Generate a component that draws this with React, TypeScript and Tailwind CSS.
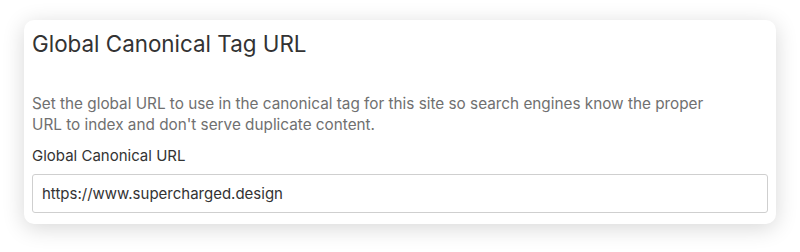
export default function App() {
  return (
    <div className="h-[252px] w-[800px] bg-white px-6 pt-5 font-['Inter',sans-serif]">
      <div className="flex h-[204px] flex-col rounded-[10px] bg-white px-2 pt-[10px] shadow-[0_4px_22px_rgba(0,0,0,0.16)]">
        <h2 className="text-[22.4px] leading-[28px] text-[#333]">Global Canonical Tag URL</h2>
        <p className="mt-[35px] max-w-[690px] text-[15.3px] leading-[21px] text-[#707070]">
          Set the global URL to use in the canonical tag for this site so search engines know the proper URL to index and don't serve duplicate content.
        </p>
        <label className="mt-[11px] text-[15px] leading-[20px] text-[#333]">Global Canonical URL</label>
        <input
          readOnly
          value="https://www.supercharged.design"
          className="mt-2 h-[39px] w-full rounded-[3px] border border-[#cfcfcf] bg-white px-[9px] text-[15px] text-[#333] outline-none"
        />
      </div>
    </div>
  );
}
